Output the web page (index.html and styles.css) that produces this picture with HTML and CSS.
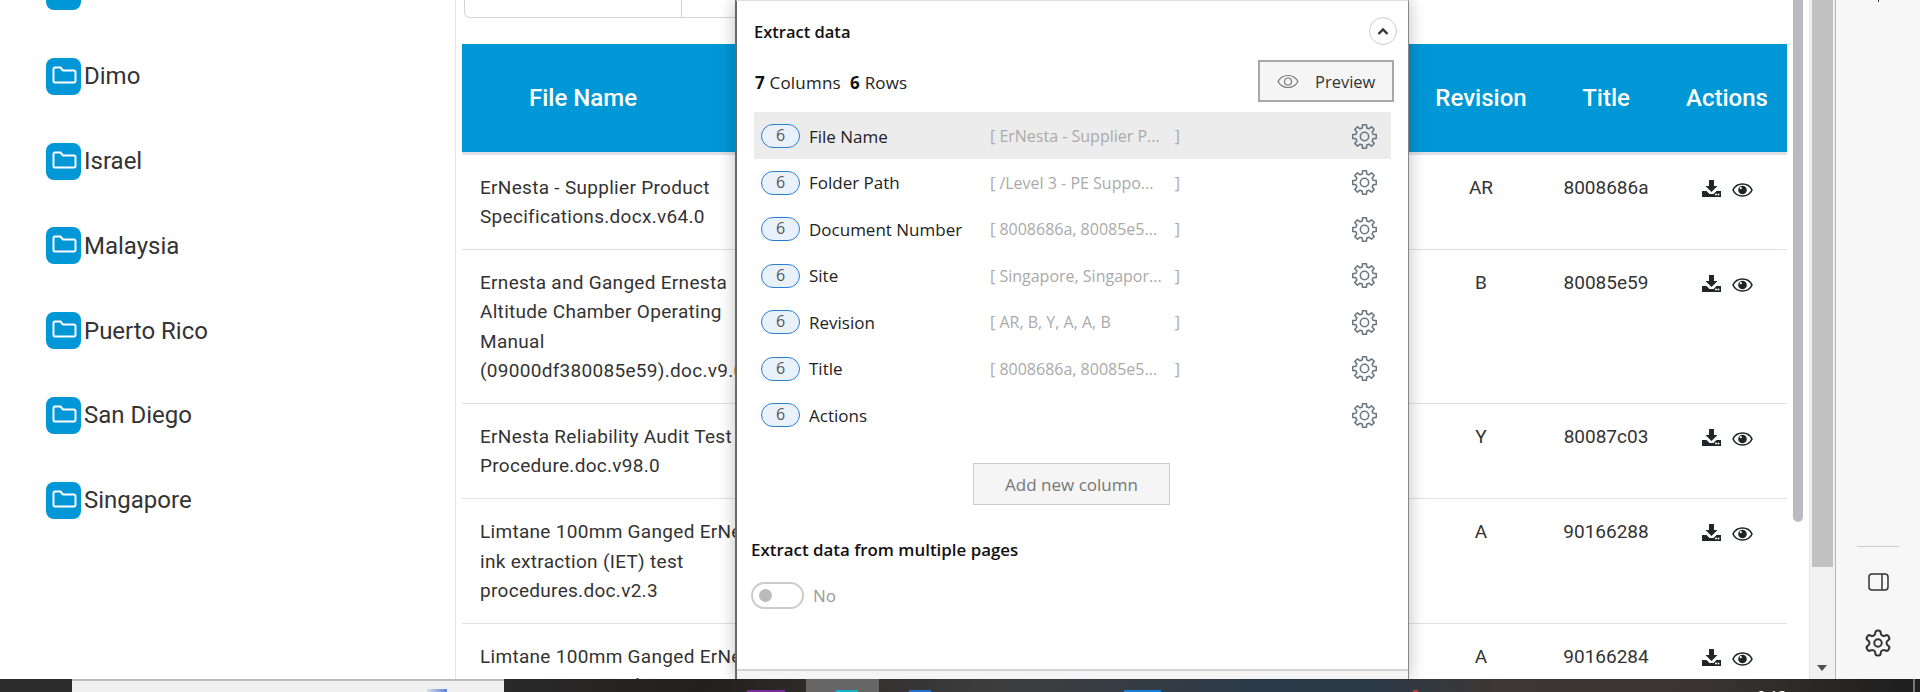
FILE: index.html
```html
<!DOCTYPE html>
<html lang="en">
<head>
    <meta charset="UTF-8">
    <title>Extract data</title>
    <link rel="stylesheet" href="styles.css">
</head>
<body>
    <svg class="defs" width="0" height="0">
        <symbol id="folder" viewBox="0 0 35 37">
            <rect width="35" height="37" rx="8" fill="#0097d7"/>
            <path d="M9 9.5h5.5l2.5 3h11a1.5 1.5 0 0 1 1.5 1.5v9a1.5 1.5 0 0 1-1.5 1.5H9A1.5 1.5 0 0 1 7.5 23V11A1.5 1.5 0 0 1 9 9.5z" fill="none" stroke="#fff" stroke-width="2"/>
        </symbol>
        <symbol id="download" viewBox="0 0 19 17">
            <path d="M7 0h5v6h3.500L9.500 12 3.500 6H7z" fill="#212529"/>
            <path d="M0 11h4.500l3 3h4l3-3H19v6H0z" fill="#212529"/>
            <circle cx="14" cy="14.600" r="1" fill="#fff"/>
            <circle cx="16.500" cy="14.600" r="1" fill="#fff"/>
        </symbol>
        <symbol id="eye" viewBox="0 0 21 14">
            <path d="M10.500 1C6 1 2.600 3.500 1 7c1.600 3.500 5 6 9.500 6s7.900-2.500 9.500-6C18.400 3.500 15 1 10.500 1z" fill="none" stroke="#212529" stroke-width="1.600"/>
            <circle cx="10.500" cy="7" r="4.300" fill="#212529"/>
            <circle cx="8.800" cy="5.200" r="1.100" fill="#fff"/>
        </symbol>
        <symbol id="gear" viewBox="0 0 24 24">
            <polygon points="9.800,3.790 10.200,.64 13.800,.64 14.200,3.790 16.250,4.640 18.760,2.700 21.300,5.240 19.360,7.750 20.210,9.800 23.360,10.200 23.360,13.800 20.210,14.200 19.360,16.250 21.300,18.760 18.760,21.300 16.250,19.360 14.200,20.210 13.800,23.360 10.200,23.360 9.800,20.210 7.750,19.360 5.240,21.300 2.700,18.760 4.640,16.250 3.790,14.200 .64,13.800 .64,10.200 3.790,9.800 4.640,7.750 2.700,5.240 5.240,2.700 7.750,4.640" fill="none" stroke="#6b7780" stroke-width="1.500" stroke-linejoin="round"/>
            <circle cx="12" cy="12" r="4" fill="none" stroke="#6b7780" stroke-width="1.500"/>
        </symbol>
    </svg>

    <div class="app">
        <div class="main">
            <aside class="sidebar">
                <div class="folder"><svg class="folder-icon"><use href="#folder"/></svg></div>
                <div class="folder"><svg class="folder-icon"><use href="#folder"/></svg>Dimo</div>
                <div class="folder"><svg class="folder-icon"><use href="#folder"/></svg>Israel</div>
                <div class="folder"><svg class="folder-icon"><use href="#folder"/></svg>Malaysia</div>
                <div class="folder"><svg class="folder-icon"><use href="#folder"/></svg>Puerto Rico</div>
                <div class="folder"><svg class="folder-icon"><use href="#folder"/></svg>San Diego</div>
                <div class="folder"><svg class="folder-icon"><use href="#folder"/></svg>Singapore</div>
            </aside>

            <section class="content">
                <div class="filters"><div class="filter-cell"></div></div>
                <table class="files">
                    <colgroup>
                        <col class="col-name">
                        <col class="col-path">
                        <col class="col-doc">
                        <col class="col-site">
                        <col class="col-rev">
                        <col class="col-title">
                        <col class="col-actions">
                    </colgroup>
                    <thead>
                        <tr>
                            <th class="th-name">File Name</th>
                            <th></th>
                            <th></th>
                            <th></th>
                            <th>Revision</th>
                            <th>Title</th>
                            <th>Actions</th>
                        </tr>
                    </thead>
                    <tbody>
                        <tr>
                            <td class="td-name">ErNesta - Supplier Product Specifications.docx.v64.0</td>
                            <td></td><td></td><td></td>
                            <td>AR</td><td>8008686a</td>
                            <td><div class="actions"><svg class="ic-download"><use href="#download"/></svg><svg class="ic-eye"><use href="#eye"/></svg></div></td>
                        </tr>
                        <tr>
                            <td class="td-name">Ernesta and Ganged Ernesta Altitude Chamber Operating Manual (09000df380085e59).doc.v9.0</td>
                            <td></td><td></td><td></td>
                            <td>B</td><td>80085e59</td>
                            <td><div class="actions"><svg class="ic-download"><use href="#download"/></svg><svg class="ic-eye"><use href="#eye"/></svg></div></td>
                        </tr>
                        <tr>
                            <td class="td-name">ErNesta Reliability Audit Test Procedure.doc.v98.0</td>
                            <td></td><td></td><td></td>
                            <td>Y</td><td>80087c03</td>
                            <td><div class="actions"><svg class="ic-download"><use href="#download"/></svg><svg class="ic-eye"><use href="#eye"/></svg></div></td>
                        </tr>
                        <tr>
                            <td class="td-name">Limtane 100mm Ganged ErNesta ink extraction (IET) test procedures.doc.v2.3</td>
                            <td></td><td></td><td></td>
                            <td>A</td><td>90166288</td>
                            <td><div class="actions"><svg class="ic-download"><use href="#download"/></svg><svg class="ic-eye"><use href="#eye"/></svg></div></td>
                        </tr>
                        <tr>
                            <td class="td-name">Limtane 100mm Ganged ErNesta pressure sensors kit procedures.doc.v2.1</td>
                            <td></td><td></td><td></td>
                            <td>A</td><td>90166284</td>
                            <td><div class="actions"><svg class="ic-download"><use href="#download"/></svg><svg class="ic-eye"><use href="#eye"/></svg></div></td>
                        </tr>
                    </tbody>
                </table>
            </section>

            <div class="inner-scroll"><div class="inner-thumb"></div></div>
        </div>

        <div class="outer-scroll">
            <div class="outer-thumb"></div>
            <div class="outer-arrow"></div>
        </div>

        <nav class="rail">
            <div class="rail-tick"></div>
            <div class="rail-line"></div>
            <svg class="rail-panel" viewBox="0 0 21 18"><rect x="1" y="1" width="19" height="16" rx="3" fill="none" stroke="#333" stroke-width="1.500"/><path d="M14 1v16" stroke="#333" stroke-width="1.500"/></svg>
            <svg class="rail-gear" viewBox="0 0 24 24"><path d="M12.220 2h-.44a2 2 0 0 0-2 2v.18a2 2 0 0 1-1 1.730l-.43.25a2 2 0 0 1-2 0l-.15-.08a2 2 0 0 0-2.730.73l-.22.38a2 2 0 0 0 .73 2.730l.15.1a2 2 0 0 1 1 1.720v.51a2 2 0 0 1-1 1.740l-.15.09a2 2 0 0 0-.73 2.730l.22.38a2 2 0 0 0 2.730.73l.15-.08a2 2 0 0 1 2 0l.43.25a2 2 0 0 1 1 1.730V20a2 2 0 0 0 2 2h.44a2 2 0 0 0 2-2v-.18a2 2 0 0 1 1-1.730l.43-.25a2 2 0 0 1 2 0l.15.08a2 2 0 0 0 2.730-.73l.22-.39a2 2 0 0 0-.73-2.730l-.15-.08a2 2 0 0 1-1-1.740v-.5a2 2 0 0 1 1-1.740l.15-.09a2 2 0 0 0 .73-2.730l-.22-.38a2 2 0 0 0-2.730-.73l-.15.08a2 2 0 0 1-2 0l-.43-.25a2 2 0 0 1-1-1.730V4a2 2 0 0 0-2-2z" fill="none" stroke="#333" stroke-width="1.600"/><circle cx="12" cy="12" r="3" fill="none" stroke="#333" stroke-width="1.600"/></svg>
        </nav>

        <!-- panel that floats over the table -->
        <div class="modal">
            <div class="modal-body">
                <div class="modal-head">
                    <h2 class="modal-title">Extract data</h2>
                    <button class="collapse-btn"><svg width="12" height="9" viewBox="0 0 12 9"><path d="M1.500 7L6 2.500 10.500 7" fill="none" stroke="#333" stroke-width="2.400"/></svg></button>
                </div>
                <div class="summary">
                    <p class="counts"><strong>7</strong> Columns&nbsp; <strong>6</strong> Rows</p>
                    <button class="preview-btn">
                        <svg width="22" height="15" viewBox="0 0 22 15"><path d="M11 1.500C6.500 1.500 3 4 1 7.500c2 3.500 5.500 6 10 6s8-2.500 10-6c-2-3.500-5.500-6-10-6z" fill="none" stroke="#777" stroke-width="1.200"/><circle cx="11" cy="7.500" r="3.500" fill="none" stroke="#777" stroke-width="1.200"/></svg>
                        Preview
                    </button>
                </div>

                <ul class="columns">
                    <li class="column column-active"><span class="pill">6</span><span class="column-name">File Name</span><span class="column-value"><span>[ ErNesta - Supplier P...</span><span>]</span></span><svg class="column-gear"><use href="#gear"/></svg></li>
                    <li class="column"><span class="pill">6</span><span class="column-name">Folder Path</span><span class="column-value"><span>[ /Level 3 - PE Suppo...</span><span>]</span></span><svg class="column-gear"><use href="#gear"/></svg></li>
                    <li class="column"><span class="pill">6</span><span class="column-name">Document Number</span><span class="column-value"><span>[ 8008686a, 80085e5...</span><span>]</span></span><svg class="column-gear"><use href="#gear"/></svg></li>
                    <li class="column"><span class="pill">6</span><span class="column-name">Site</span><span class="column-value"><span>[ Singapore, Singapor...</span><span>]</span></span><svg class="column-gear"><use href="#gear"/></svg></li>
                    <li class="column"><span class="pill">6</span><span class="column-name">Revision</span><span class="column-value"><span>[ AR, B, Y, A, A, B</span><span>]</span></span><svg class="column-gear"><use href="#gear"/></svg></li>
                    <li class="column"><span class="pill">6</span><span class="column-name">Title</span><span class="column-value"><span>[ 8008686a, 80085e5...</span><span>]</span></span><svg class="column-gear"><use href="#gear"/></svg></li>
                    <li class="column"><span class="pill">6</span><span class="column-name">Actions</span><svg class="column-gear"><use href="#gear"/></svg></li>
                </ul>

                <button class="add-btn">Add new column</button>

                <h3 class="pages-title">Extract data from multiple pages</h3>
                <div class="toggle-row">
                    <span class="toggle"><span class="toggle-knob"></span></span>
                    <span class="toggle-label">No</span>
                </div>
            </div>
            <div class="modal-foot"></div>
        </div>
    </div>

    <footer class="taskbar">
        <div class="search-box"><span class="tip tip-search"></span></div>
        <span class="tip tip-purple"></span>
        <div class="tile"><span class="tip tip-cyan"></span></div>
        <span class="tip tip-blue"></span>
        <span class="tip tip-blue2"></span>
        <span class="tip tip-red"></span>
        <span class="clock">0:12</span>
        <span class="show-desktop"></span>
    </footer>
</body>
</html>
```

FILE: styles.css
```css
* {
    box-sizing: border-box;
}
html, body {
    margin: 0;
    height: 692px;
    overflow: hidden;
}
body {
    display: flex;
    flex-direction: column;
    background: #fff;
    font-family: Roboto, sans-serif;
    color: #212529;
}
.defs {
    position: absolute;
}
.app {
    position: relative;
    display: flex;
    height: 679px;
    overflow: hidden;
}
.main {
    display: flex;
    width: 1809px;
}

/* folders on the left */
.sidebar {
    flex: none;
    width: 456px;
    margin-top: -27px;
    padding-left: 46px;
    border-right: 1px solid #e4e4e4;
    display: flex;
    flex-direction: column;
    gap: 47.800px;
}
.folder {
    display: flex;
    align-items: center;
    gap: 3px;
    height: 37px;
    font-size: 24px;
    color: #333;
}
.folder-icon {
    width: 35px;
    height: 37px;
    flex: none;
}

/* table */
.content {
    width: 1337px;
    padding-left: 6px;
    flex: none;
}
.filters {
    width: 700px;
    height: 18px;
    margin-left: 2px;
    margin-bottom: 26px;
    border: 1px solid #d4d4d4;
    border-top: none;
    border-radius: 0 0 0 6px;
}
.filter-cell {
    width: 217px;
    height: 17px;
    border-right: 1px solid #d4d4d4;
}
.files {
    width: 1325px;
    table-layout: fixed;
    border-collapse: collapse;
}
.col-name { width: 328px; }
.col-path { width: 210px; }
.col-doc { width: 200px; }
.col-site { width: 217px; }
.col-rev { width: 128px; }
.col-title { width: 122px; }
.col-actions { width: 120px; }
.files th {
    height: 109px;
    padding-top: 2px;
    background: #0097d7;
    border-bottom: 3px solid #dee2e6;
    color: #fff;
    font-size: 24px;
    font-weight: 500;
    text-align: center;
}
.files .th-name {
    text-align: left;
    padding-left: 67px;
}
.files td {
    padding: 18px 0 17.500px;
    border-bottom: 1px solid #dee2e6;
    color: #333;
    font-size: 19px;
    line-height: 29.400px;
    text-align: center;
    vertical-align: top;
}
.files .td-name {
    text-align: left;
    padding-left: 18px;
    padding-right: 14px;
    letter-spacing: 0.3px;
}
.actions {
    display: flex;
    justify-content: center;
    align-items: flex-end;
    gap: 11px;
    height: 24px;
}
.ic-download {
    width: 19px;
    height: 17px;
}
.ic-eye {
    width: 21px;
    height: 14px;
}

/* scrollbars */
.inner-scroll {
    width: 10px;
    margin-left: 0;
    background: #fff;
}
.inner-thumb {
    height: 522px;
    background: #babac0;
    border-radius: 0 0 6px 6px;
}
.outer-scroll {
    position: relative;
    flex: none;
    width: 27px;
    padding: 0 2px;
    background: #f1f1f1;
    border-left: 1px solid #e2e2e2;
    border-right: 1px solid #b5b5b5;
}
.outer-thumb {
    height: 567px;
    background: #c1c1c1;
}
.outer-arrow {
    position: absolute;
    left: 7px;
    bottom: 8px;
    border-left: 5px solid transparent;
    border-right: 5px solid transparent;
    border-top: 6px solid #505050;
}

/* right rail */
.rail {
    flex: 1;
    display: flex;
    flex-direction: column;
    align-items: center;
    background: #f7f7f7;
}
.rail-tick {
    width: 1px;
    height: 2px;
    background: #333;
}
.rail-line {
    width: 42px;
    height: 1px;
    margin-top: 544px;
    background: #ccc;
}
.rail-panel {
    width: 21px;
    height: 18px;
    margin-top: 26px;
}
.rail-gear {
    width: 30px;
    height: 30px;
    margin-top: 37px;
}

/* modal */
.modal {
    position: absolute;
    left: 735px;
    top: 0;
    width: 674px;
    height: 679px;
    display: flex;
    flex-direction: column;
    background: #fff;
    border-left: 2px solid #6a6a6a;
    border-right: 1px solid #888;
    border-top: 1px solid #ddd;
    box-shadow: 0 0 16px rgba(0, 0, 0, 0.25);
    font-family: "Open Sans", sans-serif;
}
.modal-body {
    flex: 1;
    padding: 16px 17px 0;
}
.modal-foot {
    height: 10px;
    background: #f5f5f5;
    border-top: 2px solid #d4d4d4;
}
.modal-head {
    display: flex;
    justify-content: space-between;
    align-items: center;
    height: 28px;
}
.modal-title {
    margin: 0;
    font-size: 16.500px;
    font-weight: 600;
    color: #111;
}
.collapse-btn {
    width: 28px;
    height: 28px;
    margin-right: -6px;
    padding: 0;
    border: 1px solid #ccc;
    border-radius: 50%;
    background: #fff;
    display: flex;
    align-items: center;
    justify-content: center;
}
.summary {
    display: flex;
    justify-content: space-between;
    align-items: center;
    margin-top: 15px;
}
.counts {
    margin: 0;
    padding: 2px 0 0 1px;
    font-size: 17px;
    letter-spacing: 0.2px;
    color: #222;
}
.counts strong {
    color: #111;
}
.preview-btn {
    display: flex;
    align-items: center;
    gap: 16px;
    width: 136px;
    height: 42px;
    margin-right: -3px;
    padding: 0 0 0 17px;
    background: #f5f5f5;
    border: 2px solid #a8a8a8;
    font-family: inherit;
    font-size: 16.500px;
    color: #333;
}
.columns {
    list-style: none;
    margin: 10px 0 0;
    padding: 0;
    display: grid;
    grid-auto-rows: 46.500px;
}
.column {
    display: flex;
    align-items: center;
    padding: 2px 14px 0 7px;
    font-size: 17px;
    color: #222;
}
.column-active {
    background: #ececec;
}
.pill {
    flex: none;
    width: 39px;
    height: 24px;
    margin-right: 9px;
    border: 1.500px solid #2a7fd5;
    border-radius: 12px;
    background: #e9f1fb;
    color: #555;
    text-align: center;
    font-size: 16px;
    line-height: 20px;
}
.column-name {
    flex: none;
    width: 181px;
    white-space: nowrap;
}
.column-value {
    flex: none;
    width: 190px;
    display: flex;
    justify-content: space-between;
    color: #aaa;
    font-size: 16px;
    white-space: nowrap;
}
.column-gear {
    width: 25px;
    height: 25px;
    margin-left: auto;
}
.add-btn {
    display: block;
    width: 197px;
    height: 42px;
    margin: 25px auto 0;
    padding-top: 2px;
    position: relative;
    left: -1px;
    background: #f5f5f5;
    border: 1px solid #ccc;
    font-family: inherit;
    font-size: 17px;
    color: #777;
}
.pages-title {
    margin: 34px 0 0 -3px;
    font-size: 16.900px;
    font-weight: 600;
    line-height: 22px;
    color: #111;
}
.toggle-row {
    display: flex;
    align-items: center;
    gap: 9px;
    margin: 21px 0 0 -3px;
}
.toggle {
    display: flex;
    align-items: center;
    width: 53px;
    height: 27px;
    padding-left: 6px;
    border: 2px solid #ccc;
    border-radius: 14px;
}
.toggle-knob {
    width: 13px;
    height: 13px;
    border-radius: 50%;
    background: #bbb;
}
.toggle-label {
    font-size: 17px;
    color: #999;
}

/* windows taskbar, only the top strip is visible */
.taskbar {
    position: relative;
    height: 13px;
    overflow: hidden;
    background: linear-gradient(90deg, #2b2b2b 0, #2a2a2a 504px, #231f1e 700px, #3e3e3e 1000px, #2b3a48 1260px, #2c3a46 1380px, #3d3634 1500px, #3a3532 1700px, #1f1f1f 1900px);
}
.search-box {
    position: absolute;
    left: 72px;
    top: 0;
    width: 432px;
    height: 13px;
    background: #f0f0f0;
    border-top: 2px solid #bbb;
}
.tile {
    position: absolute;
    left: 806px;
    top: 0;
    width: 73px;
    height: 13px;
    background: #666;
}
.tip {
    position: absolute;
    top: 11px;
    height: 2px;
}
.tip-search { left: 355px; top: 8px; width: 20px; height: 3px; background: linear-gradient(90deg, #d8dce4, #5a82d8); }
.tip-purple { left: 747px; width: 38px; background: #7a2a9a; }
.tip-cyan { left: 30px; width: 22px; background: #12b5c9; }
.tip-blue { left: 909px; width: 22px; background: #1f6fd6; }
.tip-blue2 { left: 1124px; width: 37px; background: #1a7fd4; }
.tip-red { left: 1413px; width: 5px; background: #d83030; }
.clock {
    position: absolute;
    left: 1757px;
    top: 6px;
    font-family: "Open Sans", sans-serif;
    font-size: 15px;
    line-height: 20px;
    color: #fff;
}
.show-desktop {
    position: absolute;
    left: 1913px;
    top: 0;
    width: 2px;
    height: 13px;
    background: #777;
}
```
